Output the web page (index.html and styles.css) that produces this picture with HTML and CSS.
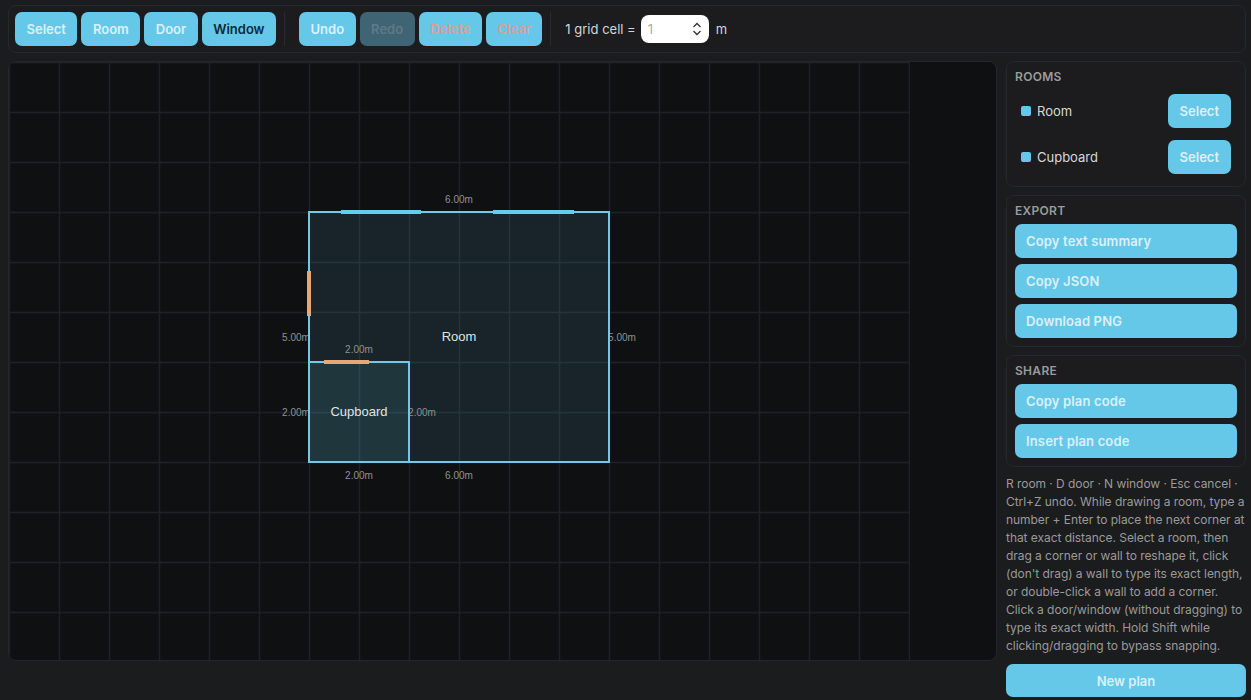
FILE: index.html
```html
<!DOCTYPE html>
<html lang="en">
<head>
  <meta charset="UTF-8" />
  <title>Floor plan</title>
  <link rel="stylesheet" href="styles.css">
</head>
<body>
  <div class="toolbar">
    <button class="btn">Select</button>
    <button class="btn">Room</button>
    <button class="btn">Door</button>
    <button class="btn active">Window</button>
    <span class="sep"></span>
    <button class="btn">Undo</button>
    <button class="btn disabled">Redo</button>
    <button class="btn danger">Delete</button>
    <button class="btn danger">Clear</button>
    <span class="sep"></span>
    <label class="scale">1 grid cell =</label>
    <div class="num-input">
      <span>1</span>
      <svg width="10" height="16" viewBox="0 0 10 16"><path d="M1.5 6 5 2.5 8.5 6M1.5 10 5 13.5 8.5 10" fill="none" stroke="#333" stroke-width="1.3"/></svg>
    </div>
    <span class="unit">m</span>
  </div>

  <div class="workspace">
    <div class="canvas-wrap">
      <svg class="plan" width="901" height="600" viewBox="0 0 901 600">
        <defs>
          <pattern id="grid" width="50" height="50" patternUnits="userSpaceOnUse">
            <path d="M.5 0V50M0 .5H50M50.5 0V50M0 50.5H50" fill="none" stroke="#1f2225" stroke-width="1.4"/>
          </pattern>
        </defs>
        <rect width="901" height="600" fill="url(#grid)"/>
        <rect x="300" y="150" width="300" height="250" fill="#62c6e8" fill-opacity="0.11"/>
        <rect x="300" y="300" width="100" height="100" fill="#62c6e8" fill-opacity="0.11"/>

        <g class="dim">
          <text x="450" y="141">6.00m</text>
          <text x="287" y="279">5.00m</text>
          <text x="613" y="279">5.00m</text>
          <text x="350" y="291">2.00m</text>
          <text x="287" y="354">2.00m</text>
          <text x="413" y="354">2.00m</text>
          <text x="350" y="417">2.00m</text>
          <text x="450" y="417">6.00m</text>
        </g>
        <text class="name" x="450" y="279">Room</text>
        <text class="name" x="350" y="354">Cupboard</text>

        <rect x="300" y="150" width="300" height="250" class="wall"/>
        <rect x="300" y="300" width="100" height="100" class="wall"/>

        <path class="win" d="M332 150H412M484 150H565"/>
        <path class="door" d="M300 209V254M315 300H360"/>
      </svg>
    </div>

    <div class="side">
      <div class="panel">
        <h4>Rooms</h4>
        <div class="room-row">
          <span class="swatch"></span><span class="room-name">Room</span>
          <button class="btn">Select</button>
        </div>
        <div class="room-row">
          <span class="swatch"></span><span class="room-name">Cupboard</span>
          <button class="btn">Select</button>
        </div>
      </div>
      <div class="panel">
        <h4>Export</h4>
        <button class="btn wide">Copy text summary</button>
        <button class="btn wide">Copy JSON</button>
        <button class="btn wide">Download PNG</button>
      </div>
      <div class="panel">
        <h4>Share</h4>
        <button class="btn wide">Copy plan code</button>
        <button class="btn wide">Insert plan code</button>
      </div>
      <p class="help">R room · D door · N window · Esc cancel · Ctrl+Z undo. While drawing a room, type a number + Enter to place the next corner at that exact distance. Select a room, then drag a corner or wall to reshape it, click (don't drag) a wall to type its exact length, or double-click a wall to add a corner. Click a door/window (without dragging) to type its exact width. Hold Shift while clicking/dragging to bypass snapping.</p>
      <button class="btn new-plan">New plan</button>
    </div>
  </div>
</body>
</html>
```

FILE: styles.css
```css
* { box-sizing: border-box; margin: 0; padding: 0; }
body {
  font-family: Inter, 'Noto Sans', sans-serif;
  background: #1b1c1e;
  color: #e6e6e6;
  height: 100vh;
  overflow: hidden;
  padding: 5px 5px 0 8px;
}

.btn {
  font-family: inherit;
  font-size: 13px;
  font-weight: 600;
  height: 34px;
  padding: 0 11.5px;
  background: #66c8e8;
  color: #dcf0f8;
  border: none;
  border-radius: 7px;
}
.btn.active { color: #0b2a40; }
.btn.disabled { background: #3f6474; color: #5f7a86; }
.btn.danger { color: #e39a95; }

.toolbar {
  display: flex;
  align-items: center;
  gap: 4px;
  height: 48px;
  padding: 0 6px;
  background: #1c1c1f;
  border: 1px solid #27282b;
  border-radius: 8px;
}
.sep {
  width: 1px;
  height: 34px;
  background: #2a2b2e;
  margin-left: 4px;
}
.sep + .btn { margin-left: 10px; }
.sep + .scale { margin-left: 10px; }
.scale { font-size: 13px; color: #d6d6d6; }
.num-input {
  display: flex;
  align-items: center;
  justify-content: space-between;
  width: 68px;
  height: 28px;
  margin-left: 1px;
  padding: 0 7px;
  background: #fff;
  border-radius: 8px;
  font-size: 13px;
  color: #aaa;
}
.unit { font-size: 13px; color: #d6d6d6; margin-left: 3px; }

.workspace {
  display: flex;
  gap: 9px;
  margin-top: 8px;
  align-items: flex-start;
}
.canvas-wrap {
  width: 989px;
  height: 600px;
  flex-shrink: 0;
  background: #0f1012;
  border: 1px solid #25262a;
  border-radius: 8px;
  overflow: hidden;
}
.plan { display: block; }
.dim text { font: 10px 'Liberation Sans', sans-serif; fill: #8f9193; text-anchor: middle; }
.name { font: 13px 'Liberation Sans', sans-serif; fill: #dfe5e7; text-anchor: middle; }
.wall { fill: none; stroke: #72c8e6; stroke-width: 2; }
.win { fill: none; stroke: #63cdf0; stroke-width: 4; }
.door { fill: none; stroke: #e5a876; stroke-width: 4; }

.side {
  flex: 1;
  display: flex;
  flex-direction: column;
  gap: 8px;
}
.panel {
  display: flex;
  flex-direction: column;
  gap: 6px;
  padding: 7px 8px 8px;
  background: #1c1c1f;
  border: 1px solid #27282b;
  border-radius: 8px;
}
.panel h4 {
  font-size: 12px;
  font-weight: 600;
  letter-spacing: 0.3px;
  line-height: 15px;
  text-transform: uppercase;
  color: #9b9b9b;
}
.room-row {
  display: flex;
  align-items: center;
  padding: 0 6px;
  margin-top: 6px;
}
.room-row .btn { padding: 0 12px; }
.panel h4 + .room-row { margin-top: 4px; }
.room-row:last-child { margin-bottom: 4px; }
.swatch {
  width: 10px;
  height: 10px;
  border-radius: 2px;
  background: #66c8e8;
  margin-right: 6px;
}
.room-name { font-size: 13px; color: #d8d8d8; flex: 1; }
.wide { width: 100%; text-align: left; padding: 0 11px; letter-spacing: 0.15px; }
.help {
  font-size: 12px;
  line-height: 18px;
  letter-spacing: -0.05px;
  color: #9a9a9a;
}
.new-plan { width: 100%; height: 33px; flex-shrink: 0; margin-top: 1px; }
```
